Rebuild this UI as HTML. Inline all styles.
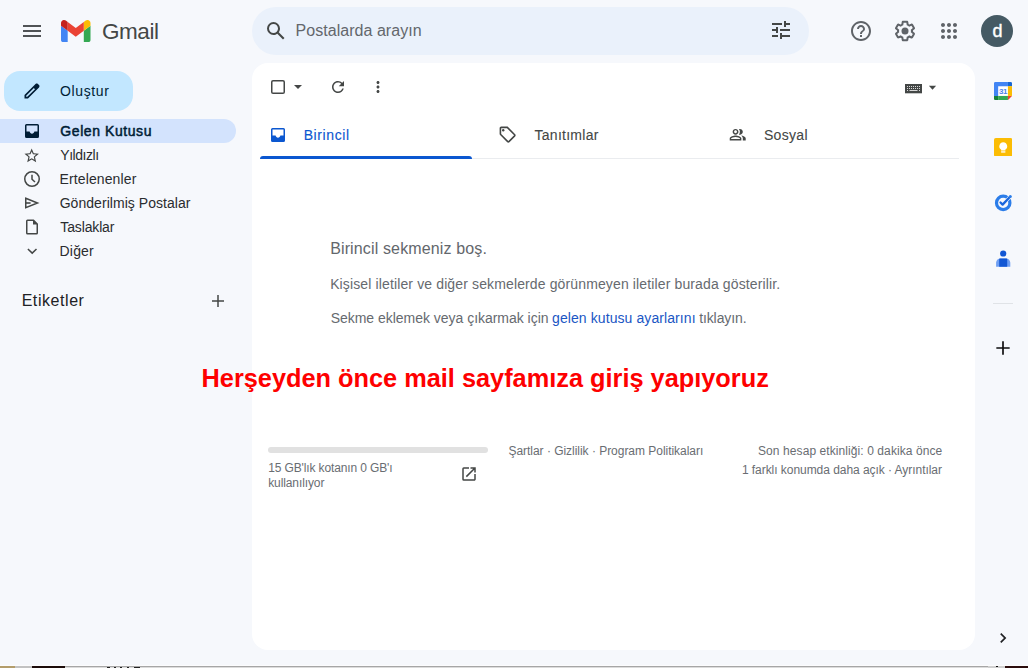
<!DOCTYPE html>
<html lang="tr">
<head>
<meta charset="utf-8">
<title>Gelen Kutusu - Gmail</title>
<style>
*{box-sizing:border-box;margin:0;padding:0}
html,body{width:1028px;height:668px;overflow:hidden}
body{background:#f6f8fc;font-family:"Liberation Sans",Arial,sans-serif;color:#202124;position:relative}
.abs{position:absolute}
svg{display:block}
.t{position:absolute;white-space:nowrap;line-height:1}
/* header */
#logo-text{left:103px;top:18px;font-size:23px;color:#444746;letter-spacing:-0.4px;line-height:26px}
#search{left:252px;top:7px;width:557px;height:48px;border-radius:24px;background:#eaf1fb}
#search-ph{left:296px;top:21px;font-size:16px;color:#5f6368;line-height:20px}
#avatar{left:981px;top:15px;width:32px;height:32px;border-radius:50%;background:#455a64;color:#fff;font-size:18px;text-align:center;line-height:33px;-webkit-text-stroke:0.4px #fff;padding-left:1px}
/* sidebar */
#compose{left:4px;top:71px;width:129px;height:40px;border-radius:16px;background:#c2e7ff}
#compose-t{left:60px;top:82px;font-size:14.5px;color:#001d35;line-height:18px}
#active{left:0;top:119px;width:236px;height:24px;border-radius:0 12px 12px 0;background:#d3e3fd}
.nav{left:60px;font-size:14.5px;color:#202124;line-height:18px}
.nav.b{color:#001d35}
#labels{left:22px;top:290px;font-size:17px;color:#202124;line-height:20px}
/* main */
#main{left:252px;top:63px;width:723px;height:587px;border-radius:16px;background:#fff}
#tabline{left:260px;top:158px;width:699px;height:1px;background:#eaecef}
#tabactive{left:260px;top:156px;width:212px;height:3px;background:#0b57d0;border-radius:3px 3px 0 0}
.tab{font-size:14.5px;color:#444746;line-height:18px;top:126px}
.msg{font-size:14.5px;color:#5f6368;line-height:18px;left:331px}
.msg a{color:#1a56c4;text-decoration:none}
#red{left:201.5px;top:363px;font-size:25.33px;font-weight:bold;color:#fe0000;line-height:30px}
.foot{font-size:12px;color:#5f6368;line-height:15px}
#bar{left:268px;top:447px;width:220px;height:6px;border-radius:3px;background:#e1e1e1}
#sep{left:993px;top:303px;width:20px;height:1px;background:#e0e3e7}
/*GEN*/
#logo-text{font-size:22.5px;line-height:26.5px;left:101.95px;top:19.00px;letter-spacing:-0.413px;color:#444746}
#search-ph{font-size:16px;line-height:20px;left:295.60px;top:21.00px;letter-spacing:0.034px;color:#63676c}
#compose-t{font-size:14px;line-height:18px;left:60.05px;top:82.00px;letter-spacing:0.617px;color:#001d35}
#n1{font-size:14px;line-height:18px;left:60.30px;top:122.00px;letter-spacing:0.577px;color:#001d35;-webkit-text-stroke:0.5px #001d35}
#n2{font-size:14px;line-height:18px;left:60.30px;top:146.00px;letter-spacing:-0.450px;color:#2a2c2f}
#n3{font-size:14px;line-height:18px;left:59.55px;top:170.00px;letter-spacing:0.114px;color:#2a2c2f}
#n4{font-size:14px;line-height:18px;left:59.65px;top:194.00px;letter-spacing:0.050px;color:#2a2c2f}
#n5{font-size:14px;line-height:18px;left:60.30px;top:218.00px;letter-spacing:-0.138px;color:#2a2c2f}
#n6{font-size:14px;line-height:18px;left:59.55px;top:242.00px;letter-spacing:0.187px;color:#2a2c2f}
#labels{font-size:16px;line-height:20px;left:21.65px;top:291.00px;letter-spacing:0.562px;color:#202124}
#t1{font-size:14px;line-height:18px;left:303.65px;top:126.00px;letter-spacing:0.600px;color:#0b57d0;-webkit-text-stroke:0.12px #0b57d0}
#t2{font-size:14px;line-height:18px;left:534.55px;top:126.00px;letter-spacing:0.261px;color:#444746;-webkit-text-stroke:0.1px #444746}
#t3{font-size:14px;line-height:18px;left:763.95px;top:126.00px;letter-spacing:0.310px;color:#444746;-webkit-text-stroke:0.1px #444746}
#m1{font-size:16px;line-height:20px;left:330.15px;top:239.00px;letter-spacing:0.140px;color:#63676c}
#m2{font-size:14px;line-height:18px;left:330.15px;top:275.00px;letter-spacing:0.130px;color:#666a6f}
#m3{font-size:14px;line-height:18px;left:330.65px;top:309.00px;letter-spacing:-0.023px;color:#666a6f}
#m3a{font-size:14px;line-height:18px;left:552.05px;top:309.00px;letter-spacing:0.086px;color:#1a56c4}
#m3b{font-size:14px;line-height:18px;left:699.15px;top:309.00px;letter-spacing:-0.100px;color:#666a6f}
#f1{font-size:12px;line-height:16px;left:268.20px;top:460.00px;letter-spacing:-0.130px;color:#696d72}
#f1b{font-size:12px;line-height:16px;left:268.20px;top:475.00px;letter-spacing:-0.105px;color:#696d72}
#f2{font-size:12px;line-height:16px;left:508.45px;top:443.00px;letter-spacing:-0.029px;color:#696d72}
#f3{font-size:12px;line-height:16px;left:758.00px;top:443.00px;letter-spacing:0.085px;color:#696d72}
#f4{font-size:12px;line-height:16px;left:741.90px;top:462.00px;letter-spacing:-0.047px;color:#696d72}
/*ENDGEN*/
</style>
</head>
<body>

<!-- ===== header ===== -->
<svg class="abs" style="left:20px;top:19px" width="24" height="24" viewBox="0 0 24 24"><path fill="#505356" d="M3 18h18v-2H3v2zm0-5h18v-2H3v2zm0-7v2h18V6H3z"/></svg>
<svg class="abs" style="left:61.300px;top:19.800px" width="29.500" height="22.100" viewBox="52 42 88 66" preserveAspectRatio="none"><path fill="#4285f4" d="M58 108h14V74L52 59v43c0 3.32 2.69 6 6 6"/><path fill="#34a853" d="M120 108h14c3.32 0 6-2.69 6-6V59l-20 15"/><path fill="#fbbc04" d="M120 48v26l20-15v-8c0-7.42-8.47-11.65-14.4-7.2"/><path fill="#ea4335" d="M72 74V48l24 18 24-18v26L96 92"/><path fill="#c5221f" d="M52 51v8l20 15V48l-5.6-4.2c-5.94-4.45-14.4-.22-14.4 7.2"/></svg>
<div class="t" id="logo-text">Gmail</div>

<div class="abs" id="search"></div>
<svg class="abs" style="left:264px;top:19px" width="24" height="24" viewBox="0 0 24 24"><path fill="#444746" d="M20.49 19l-5.73-5.73C15.53 12.2 16 10.91 16 9.5A6.5 6.5 0 1 0 9.500 16c1.41 0 2.700-.47 3.770-1.240L19 20.490 20.490 19zM5 9.500C5 7.010 7.010 5 9.500 5S14 7.010 14 9.500 11.990 14 9.500 14 5 11.990 5 9.500z"/></svg>
<div class="t" id="search-ph">Postalarda arayın</div>
<svg class="abs" style="left:769px;top:18px" width="24" height="24" viewBox="0 0 24 24"><path fill="#444746" d="M3 17v2h6v-2H3zM3 5v2h10V5H3zm10 16v-2h8v-2h-8v-2h-2v6h2zM7 9v2H3v2h4v2h2V9H7zm14 4v-2H11v2h10zm-6-4h2V7h4V5h-4V3h-2v6z"/></svg>

<svg class="abs" style="left:849px;top:19px" width="24" height="24" viewBox="0 0 24 24"><path fill="#5f6368" d="M11 18h2v-2h-2v2zm1-16C6.480 2 2 6.480 2 12s4.480 10 10 10 10-4.480 10-10S17.520 2 12 2zm0 18c-4.410 0-8-3.590-8-8s3.590-8 8-8 8 3.590 8 8-3.590 8-8 8zm0-14c-2.210 0-4 1.790-4 4h2c0-1.100.9-2 2-2s2 .9 2 2c0 2-3 1.750-3 5h2c0-2.250 3-2.500 3-5 0-2.210-1.790-4-4-4z"/></svg>
<svg class="abs" style="left:893px;top:19px" width="24" height="24" viewBox="0 0 24 24"><path fill="#5f6368" d="M13.850 22.250h-3.700c-.74 0-1.360-.54-1.450-1.270l-.27-1.890c-.27-.14-.53-.29-.79-.46l-1.800.72c-.7.260-1.470-.03-1.810-.65L2.200 15.530c-.35-.66-.2-1.440.36-1.880l1.530-1.190c-.01-.15-.02-.3-.02-.46 0-.15.010-.31.020-.46l-1.520-1.190c-.59-.45-.74-1.260-.37-1.880l1.850-3.190c.34-.62 1.110-.9 1.790-.63l1.810.73c.26-.17.520-.32.780-.46l.27-1.910c.09-.7.710-1.250 1.440-1.250h3.700c.74 0 1.360.54 1.450 1.270l.27 1.890c.27.14.53.29.79.46l1.800-.72c.71-.26 1.480.03 1.820.65l1.840 3.180c.36.660.2 1.440-.36 1.880l-1.520 1.190c.1.150.2.300.2.460s-.1.310-.2.460l1.520 1.190c.56.450.72 1.230.37 1.860l-1.860 3.220c-.34.620-1.110.9-1.800.63l-1.800-.72c-.26.170-.52.320-.78.460l-.27 1.910c-.1.680-.72 1.220-1.460 1.220zm-3.230-2h2.760l.37-2.550.53-.22c.44-.18.880-.44 1.340-.78l.45-.34 2.380.96 1.380-2.400-2.030-1.580.07-.56c.03-.26.060-.51.060-.78s-.03-.53-.06-.78l-.07-.56 2.030-1.580-1.390-2.400-2.390.96-.45-.35c-.42-.32-.87-.58-1.330-.77l-.52-.22-.37-2.550h-2.760l-.37 2.550-.53.210c-.44.190-.88.440-1.340.79l-.45.330-2.380-.95-1.390 2.390 2.030 1.580-.07.56a7 7 0 0 0-.06.79c0 .26.020.53.060.78l.07.56-2.030 1.580 1.380 2.400 2.390-.96.450.35c.43.330.86.580 1.330.77l.53.220.38 2.550z"/><circle cx="12" cy="12" r="3.500" fill="#5f6368"/></svg>
<svg class="abs" style="left:937px;top:19px" width="24" height="24" viewBox="0 0 24 24"><path fill="#5f6368" d="M6,8c1.100,0,2-0.900,2-2s-0.900-2-2-2S4,4.900,4,6S4.900,8,6,8z M12,20c1.100,0,2-0.900,2-2s-0.900-2-2-2s-2,0.900-2,2S10.900,20,12,20z M6,20c1.100,0,2-0.900,2-2s-0.900-2-2-2s-2,0.900-2,2S4.900,20,6,20z M6,14c1.100,0,2-0.900,2-2s-0.900-2-2-2s-2,0.900-2,2S4.900,14,6,14z M12,14c1.100,0,2-0.900,2-2s-0.900-2-2-2s-2,0.900-2,2S10.900,14,12,14z M16,6c0,1.100,0.900,2,2,2s2-0.900,2-2s-0.900-2-2-2S16,4.900,16,6z M12,8c1.100,0,2-0.900,2-2s-0.900-2-2-2s-2,0.900-2,2S10.900,8,12,8z M18,14c1.100,0,2-0.900,2-2s-0.900-2-2-2s-2,0.900-2,2S16.900,14,18,14z M18,20c1.100,0,2-0.900,2-2s-0.900-2-2-2s-2,0.900-2,2S16.900,20,18,20z"/></svg>
<div class="abs" id="avatar">d</div>

<!-- ===== sidebar ===== -->
<div class="abs" id="compose"></div>
<svg class="abs" style="left:22px;top:81px" width="20" height="20" viewBox="0 0 24 24"><path fill="#001d35" d="M20.410 4.940l-1.350-1.350c-.78-.78-2.050-.78-2.830 0L3 16.820V21h4.180L20.410 7.770c.79-.78.790-2.050 0-2.830zm-14.060 14.060H5v-1.350l9.230-9.230 1.350 1.350-9.230 9.230z"/></svg>
<div class="t" id="compose-t">Oluştur</div>

<div class="abs" id="active"></div>
<svg class="abs" style="left:22px;top:121px" width="20" height="20" viewBox="0 0 20 20"><path fill="#001d35" fill-rule="evenodd" d="M4.5 3h11A1.5 1.5 0 0 1 17 4.5v11a1.5 1.5 0 0 1-1.500 1.5h-11A1.5 1.5 0 0 1 3 15.5v-11A1.5 1.5 0 0 1 4.5 3zM4.5 4.500v6.100h3.100c.2 1.200 1.200 2.100 2.400 2.100s2.200-.9 2.400-2.100h3.100V4.500z"/></svg>
<div class="t nav b" id="n1">Gelen Kutusu</div>

<svg class="abs" style="left:23.200px;top:147.400px" width="17.400" height="17.400" viewBox="0 0 24 24"><path fill="#444746" d="M22 9.240l-7.190-.62L12 2 9.190 8.630 2 9.240l5.460 4.730L5.820 21 12 17.270 18.180 21l-1.630-7.030L22 9.240zM12 15.400l-3.760 2.270 1-4.280-3.320-2.880 4.380-.38L12 6.100l1.710 4.040 4.380.38-3.320 2.880 1 4.280L12 15.400z"/></svg>
<div class="t nav" id="n2">Yıldızlı</div>

<svg class="abs" style="left:22px;top:169px" width="20" height="20" viewBox="0 0 20 20"><circle cx="10" cy="10" r="7.250" fill="none" stroke="#444746" stroke-width="1.500"/><path fill="none" stroke="#444746" stroke-width="1.500" d="M10 5.800V10.200L13 13"/></svg>
<div class="t nav" id="n3">Ertelenenler</div>

<svg class="abs" style="left:22px;top:193px" width="20" height="20" viewBox="0 0 20 20"><path fill="none" stroke="#444746" stroke-width="1.500" stroke-linejoin="miter" stroke-miterlimit="10" d="M3.750 5.300L15.500 10 3.750 14.700z"/><path fill="none" stroke="#444746" stroke-width="1.600" d="M3.750 10H8.600"/></svg>
<div class="t nav" id="n4">Gönderilmiş Postalar</div>

<svg class="abs" style="left:22px;top:217px" width="20" height="20" viewBox="0 0 20 20"><path fill="none" stroke="#444746" stroke-width="1.500" stroke-linejoin="round" d="M5.500 3.250H11.500L15.250 7V16a.75.75 0 0 1-.75.750H5.500a.75.75 0 0 1-.75-.75V4a.75.75 0 0 1 .75-.75z"/><path fill="#444746" d="M11 2.800V7.500H15.700z"/></svg>
<div class="t nav" id="n5">Taslaklar</div>

<svg class="abs" style="left:22px;top:241px" width="20" height="20" viewBox="0 0 20 20"><path fill="none" stroke="#444746" stroke-width="1.500" d="M5.900 8L10.200 12.100 14.500 8"/></svg>
<div class="t nav" id="n6">Diğer</div>

<div class="t" id="labels">Etiketler</div>
<svg class="abs" style="left:208px;top:291px" width="20" height="20" viewBox="0 0 20 20"><path fill="none" stroke="#444746" stroke-width="1.500" d="M10 4V16M4 10H16"/></svg>

<!-- ===== main panel ===== -->
<div class="abs" id="main"></div>

<svg class="abs" style="left:268px;top:77px" width="20" height="20" viewBox="0 0 20 20"><rect x="3.750" y="3.750" width="12.500" height="12.500" rx="1.300" fill="none" stroke="#444746" stroke-width="1.500"/></svg>
<svg class="abs" style="left:293px;top:84px" width="10" height="6" viewBox="0 0 10 6"><path fill="#444746" d="M1 1h8L5 5z"/></svg>
<svg class="abs" style="left:329.300px;top:77.800px" width="18" height="18" viewBox="0 0 24 24"><path fill="#444746" d="M17.650 6.350A7.958 7.958 0 0 0 12 4c-4.420 0-7.990 3.580-7.990 8s3.570 8 7.990 8c3.730 0 6.840-2.550 7.730-6h-2.080A5.990 5.990 0 0 1 12 18c-3.310 0-6-2.690-6-6s2.690-6 6-6c1.660 0 3.140.69 4.220 1.780L13 11h7V4l-2.350 2.350z"/></svg>
<svg class="abs" style="left:369px;top:78px" width="18" height="18" viewBox="0 0 24 24"><path fill="#444746" d="M12 8c1.100 0 2-.9 2-2s-.9-2-2-2-2 .9-2 2 .9 2 2 2zm0 2c-1.100 0-2 .9-2 2s.9 2 2 2 2-.9 2-2-.9-2-2-2zm0 6c-1.100 0-2 .9-2 2s.9 2 2 2 2-.9 2-2-.9-2-2-2z"/></svg>

<svg class="abs" style="left:905px;top:84px" width="17" height="9.500" viewBox="0 0 17 9.500"><rect x="0" y="0" width="17" height="9.300" fill="#444746"/><g fill="#d8d8d8"><rect x="2" y="2" width="1" height="1"/><rect x="4" y="2" width="1" height="1"/><rect x="6" y="2" width="1" height="1"/><rect x="8" y="2" width="1" height="1"/><rect x="10" y="2" width="1" height="1"/><rect x="12" y="2" width="1" height="1"/><rect x="14" y="2" width="1" height="1"/><rect x="2" y="4" width="1" height="1"/><rect x="4" y="4" width="1" height="1"/><rect x="6" y="4" width="1" height="1"/><rect x="8" y="4" width="1" height="1"/><rect x="10" y="4" width="1" height="1"/><rect x="12" y="4" width="1" height="1"/><rect x="14" y="4" width="1" height="1"/><rect x="2" y="6" width="1" height="1"/><rect x="4.500" y="6" width="8" height="1"/><rect x="14" y="6" width="1" height="1"/></g></svg>
<svg class="abs" style="left:927.900px;top:85px" width="9" height="5.400" viewBox="0 0 10 6"><path fill="#444746" d="M1 .7h8L5 5.300z"/></svg>

<!-- tabs -->
<div class="abs" id="tabline"></div>
<div class="abs" id="tabactive"></div>
<svg class="abs" style="left:268px;top:125px" width="20" height="20" viewBox="0 0 20 20"><path fill="#0b57d0" fill-rule="evenodd" d="M4.5 3h11A1.5 1.5 0 0 1 17 4.5v11a1.5 1.5 0 0 1-1.500 1.5h-11A1.5 1.5 0 0 1 3 15.5v-11A1.5 1.5 0 0 1 4.5 3zM4.5 4.500v6.100h3.100c.2 1.200 1.200 2.100 2.400 2.100s2.200-.9 2.400-2.100h3.100V4.500z"/></svg>
<div class="t tab" id="t1">Birincil</div>
<svg class="abs" style="left:498.350px;top:125.300px" width="19.300" height="19.300" viewBox="0 0 24 24"><path fill="#444746" d="M21.410 11.410l-8.830-8.830c-.37-.37-.88-.58-1.410-.58H4c-1.100 0-2 .9-2 2v7.170c0 .53.210 1.040.59 1.410l8.830 8.830c.78.780 2.050.780 2.830 0l7.170-7.170c.78-.78.780-2.040-.01-2.830zM12.830 20L4 11.170V4h7.170L20 12.830 12.830 20z"/><circle cx="6.500" cy="6.500" r="1.500" fill="#444746"/></svg>
<div class="t tab" id="t2">Tanıtımlar</div>
<svg class="abs" style="left:729.300px;top:126.100px" width="17.450" height="17.450" viewBox="0 0 24 24"><path fill="#444746" d="M16.670 13.130C18.040 14.060 19 15.320 19 17v3h4v-3c0-2.180-3.570-3.470-6.330-3.870zM15 12c2.210 0 4-1.790 4-4s-1.790-4-4-4c-.47 0-.91.1-1.330.24C14.500 5.270 15 6.580 15 8s-.5 2.730-1.330 3.760c.42.140.86.240 1.330.24zM9 12c2.210 0 4-1.790 4-4s-1.790-4-4-4-4 1.790-4 4 1.790 4 4 4zm0-6c1.100 0 2 .9 2 2s-.9 2-2 2-2-.9-2-2 .9-2 2-2zm0 7c-2.670 0-8 1.340-8 4v3h16v-3c0-2.660-5.330-4-8-4zm6 5H3v-.99C3.200 16.290 6.300 15 9 15s5.800 1.290 6 2v1z"/></svg>
<div class="t tab" id="t3">Sosyal</div>

<!-- empty state -->
<div class="t msg" id="m1">Birincil sekmeniz boş.</div>
<div class="t msg" id="m2">Kişisel iletiler ve diğer sekmelerde görünmeyen iletiler burada gösterilir.</div>
<div class="t msg" id="m3">Sekme eklemek veya çıkarmak için</div>
<div class="t msg" id="m3a">gelen kutusu ayarlarını</div>
<div class="t msg" id="m3b">tıklayın.</div>

<div class="t" id="red">Herşeyden önce mail sayfamıza giriş yapıyoruz</div>

<!-- footer -->
<div class="abs" id="bar"></div>
<div class="t foot" id="f1">15 GB'lık kotanın 0 GB'ı</div>
<div class="t foot" id="f1b">kullanılıyor</div>
<svg class="abs" style="left:460px;top:465px" width="18" height="18" viewBox="0 0 24 24"><path fill="#444746" d="M19 19H5V5h7V3H5a2 2 0 0 0-2 2v14a2 2 0 0 0 2 2h14c1.100 0 2-.9 2-2v-7h-2v7zM14 3v2h3.590l-9.830 9.830 1.410 1.410L19 6.410V10h2V3h-7z"/></svg>
<div class="t foot" id="f2">Şartlar · Gizlilik · Program Politikaları</div>
<div class="t foot" id="f3">Son hesap etkinliği: 0 dakika önce</div>
<div class="t foot" id="f4">1 farklı konumda daha açık · Ayrıntılar</div>

<!-- ===== right rail ===== -->
<svg class="abs" style="left:993.800px;top:81.800px" width="18.100" height="18.100" viewBox="0 0 20 20"><rect x="4.600" y="4.600" width="10.800" height="10.800" fill="#fff"/><path fill="#4285f4" d="M1.500 0h13.900v4.600H4.600v10.800H0V1.500A1.500 1.500 0 0 1 1.500 0z"/><path fill="#1967d2" d="M15.400 0h3.100A1.500 1.500 0 0 1 20 1.500v3.100h-4.600z"/><path fill="#fbbc04" d="M15.400 4.600H20v10.800h-4.600z"/><path fill="#188038" d="M0 15.400h4.600V20H1.500A1.500 1.500 0 0 1 0 18.500z"/><path fill="#34a853" d="M4.600 15.400h10.800V20H4.600z"/><path fill="#ea4335" d="M15.400 15.400H20L15.400 20z"/><text x="10" y="13.200" font-family="Liberation Sans,Arial,sans-serif" font-size="8.800" font-weight="bold" fill="#4b7fe8" text-anchor="middle" letter-spacing="-0.400">31</text></svg>
<svg class="abs" style="left:993.900px;top:137.600px" width="18.500" height="18.600" viewBox="0 0 20 20" preserveAspectRatio="none"><rect x="0" y="0" width="20" height="20" rx="2" fill="#fbbc04"/><path fill="#fff" d="M10 4.600a4.300 4.300 0 0 0-2.300 7.900V13.500h4.600v-1a4.300 4.300 0 0 0-2.300-7.900z"/><rect x="7.700" y="14.300" width="4.600" height="1.400" fill="#fff"/></svg>
<svg class="abs" style="left:993px;top:192.300px" width="20" height="20" viewBox="0 0 20 20"><circle cx="10.200" cy="10.900" r="6.700" fill="none" stroke="#2b7de9" stroke-width="3.200"/><path fill="none" stroke="#f6f8fc" stroke-width="3.400" d="M13.500 8.600L19 2.600"/><path fill="none" stroke="#1a66dc" stroke-width="2.300" stroke-linecap="round" stroke-linejoin="round" d="M7.500 10.500L9.600 12.600 16.600 5.200"/><circle cx="17.300" cy="4.600" r="1.500" fill="#2b7de9"/></svg>
<svg class="abs" style="left:993px;top:249px" width="20" height="20" viewBox="0 0 20 20"><circle cx="10.200" cy="4.500" r="3.100" fill="#1257d4"/><path fill="#6f9ff3" d="M3.100 17.700V13.700C3.100 11 5.400 9.500 7.600 9.500h5.200c2.200 0 4.500 1.500 4.500 4.200v4z"/><path fill="#1257d4" d="M6.200 17.700V9.700c.5-.15 1-.2 1.400-.2h5.200c.4 0 .9.050 1.400.2v8z"/></svg>
<div class="abs" id="sep"></div>
<svg class="abs" style="left:993px;top:338px" width="20" height="20" viewBox="0 0 24 24"><path fill="#0c0c0c" d="M20 13h-7v7h-2v-7H4v-2h7V4h2v7h7v2z"/></svg>
<svg class="abs" style="left:993px;top:628px" width="20" height="20" viewBox="0 0 24 24"><path fill="#202124" d="M8.590 16.590L13.170 12 8.590 7.410 10 6l6 6-6 6-1.410-1.410z"/></svg>

<!-- bottom sliver of desktop below the browser window -->
<div class="abs" style="left:0;top:665px;width:1028px;height:1px;background:#fcfcfd"></div>
<div class="abs" style="left:0;top:666px;width:1028px;height:1px;background:#a6a6a6"></div>
<div class="abs" style="left:0;top:667px;width:1028px;height:1px;background:#dcdcdc"></div>
<div class="abs" style="left:0;top:666px;width:15px;height:2px;background:#b39d6b"></div>
<div class="abs" style="left:15px;top:666px;width:17px;height:2px;background:#c2c2c2"></div>
<div class="abs" style="left:32px;top:666px;width:33px;height:2px;background:#1c0c0a"></div>
<div class="abs" style="left:107px;top:667px;width:3px;height:1px;background:#222"></div>
<div class="abs" style="left:114px;top:667px;width:2px;height:1px;background:#222"></div>
<div class="abs" style="left:120px;top:667px;width:2px;height:1px;background:#222"></div>
<div class="abs" style="left:127px;top:667px;width:2px;height:1px;background:#222"></div>
<div class="abs" style="left:134px;top:667px;width:6px;height:1px;background:#222"></div>
<div class="abs" style="left:988px;top:666px;width:17px;height:2px;background:#d0d0d0"></div>
<div class="abs" style="left:996px;top:666px;width:2px;height:1px;background:#111"></div>
<div class="abs" style="left:1005px;top:666px;width:23px;height:2px;background:#2c0d0d"></div>

</body>
</html>
